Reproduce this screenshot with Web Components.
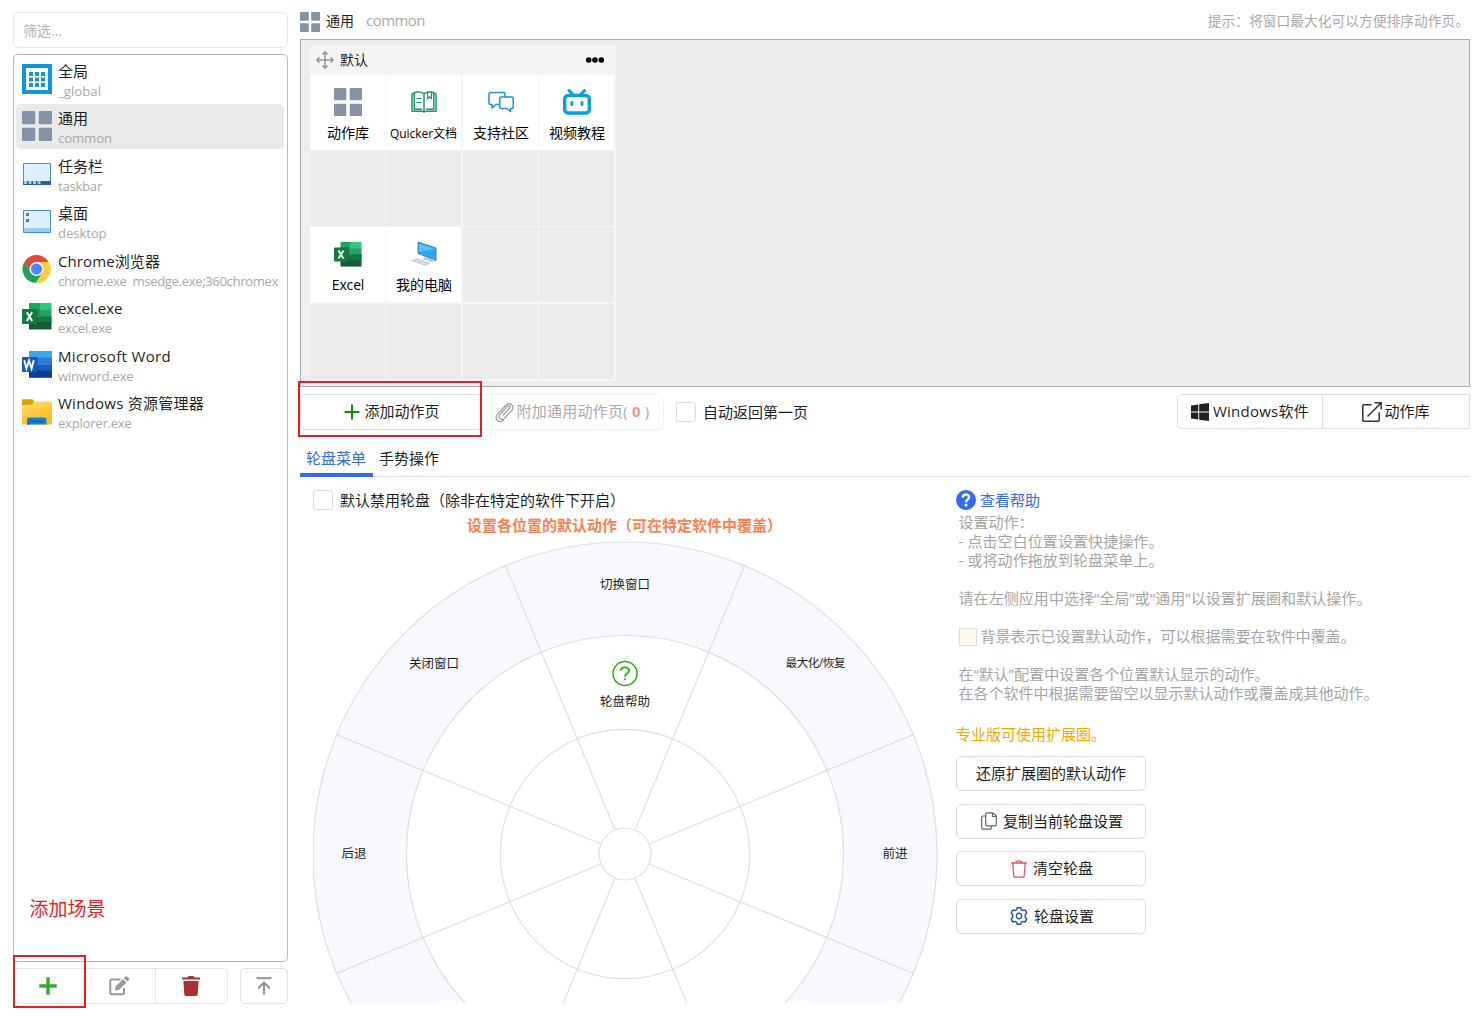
<!DOCTYPE html>
<html lang="zh-CN">
<head>
<meta charset="utf-8">
<title>Quicker</title>
<style>
html,body{margin:0;padding:0;background:#fff}
body{width:1482px;height:1016px;overflow:hidden;font:15px/20px "Open Sans","Noto Sans CJK SC",sans-serif;color:#1f1f1f}
</style>
</head>
<body>
<quicker-app></quicker-app>
<script>
const ICONS = {
  global: ['0 0 30 30', '<path fill="#1296db" d="M0 0h30v30H0z"/><path fill="#fff" d="M4 4h22v22H4z"/><g fill="#1296db"><path d="M7 8h4v4H7zM13 8h4v4h-4zM19 8h4v4h-4zM7 13.500h4v4H7zM13 13.500h4v4h-4zM19 13.500h4v4h-4zM7 19h4v4H7zM13 19h4v4h-4zM19 19h4v4h-4z"/></g>'],
  tiles: ['0 0 30 30', '<g fill="#8592a6"><rect width="13.2" height="13.2" rx="1.3"/><rect x="16.8" width="13.2" height="13.2" rx="1.3"/><rect y="16.8" width="13.2" height="13.2" rx="1.3"/><rect x="16.8" y="16.8" width="13.2" height="13.2" rx="1.3"/></g>'],
  taskbar: ['0 0 30 30', '<path fill="#def0ff" stroke="#4a8bd0" d="M1.5 4.5h27v21h-27z"/><path fill="#2f5f9e" d="M1 22h28v4H1z"/><path fill="#99ccff" d="M2 22h3v3H2zM6.5 22h3v3h-3zM11 22h3v3h-3zM15.500 22h3v3h-3z"/>'],
  desktop: ['0 0 30 30', '<path fill="#def0ff" stroke="#4a8bd0" d="M1.500 4.500h27v22h-27z"/><path fill="#99ccff" d="M2 22h26v4H2z"/><path fill="#3f80c8" d="M4 7h3v3H4zM4 13h3v3H4z"/>'],
  chrome: ['0 0 30 30', '<circle cx="14.500" cy="15" r="14" fill="#fc4"/><path fill="#dc4a3e" d="M2.400 8A14 14 0 0 1 26.600 8H14.500L9 18.200z"/><path fill="#1aa260" d="M2.400 8A14 14 0 0 0 13.800 29L20.600 18.500 14.500 22 8.500 18.500z"/><path fill="#ffcd40" d="M26.600 8A14 14 0 0 1 13.800 29L20.600 18.500 20.500 11.500 14.500 8z"/><circle cx="14.500" cy="15" r="7" fill="#f5f5f5"/><circle cx="14.500" cy="15" r="5.500" fill="#4b87f0"/>'],
  excel: ['0 0 30 30', '<path fill="#21a366" d="M7 2h11v7H7z"/><path fill="#33c481" d="M18 2h11.500v7H18z"/><path fill="#1b9257" d="M7 8.700h11v6.600H7z"/><path fill="#21a366" d="M18 8.700h11.500v6.600H18z"/><path fill="#107c41" d="M7 15.300h22.500V22H7z"/><path fill="#185c37" d="M7 21h22.500v7.500H7z"/><path fill="#117a42" d="M18 15.300h11.500V21H18z"/><path fill="#0b6032" d="M7 8h9v15H7z" opacity=".5"/><rect y="8" width="15" height="15" rx="1" fill="#107c41"/><path stroke="#fff" stroke-width="2" fill="none" d="M4.800 11.300l5.300 8.600M10.100 11.300L4.800 19.900"/>'],
  word: ['0 0 30 30', '<path fill="#41a5ee" d="M7 2h23v7H7z"/><path fill="#2b7cd3" d="M7 8.600h23v6.800H7z"/><path fill="#185abd" d="M7 15.300h23v6.800H7z"/><path fill="#103f91" d="M7 21.800h23v7H7z"/><path fill="#0b3a80" d="M7 8h9v15H7z" opacity=".4"/><rect y="8" width="15" height="15" rx="1" fill="#185abd"/><path stroke="#fff" stroke-width="1.900" fill="none" d="M2.300 11.200l2.100 8.400L7 11.500l2.600 8.100 2.100-8.400"/>'],
  folder: ['0 0 30 30', '<path fill="#dfa000" d="M0 4.200a2 2 0 0 1 1-1h9.200l2.300 2.200L10 10H0z"/><path fill="url(#fo)" d="M0 9l9-.3L13 5.700h15.500a1.500 1.500 0 0 1 1.500 1.500V28.500H0z"/><path fill="#1181d4" d="M5 28.500v-5a2 2 0 0 1 2-2h15.500a2 2 0 0 1 2 2v5z"/><path fill="#0a5fa8" d="M8 24.500h13.500V26H8zM5 27.500h3v1H5z"/><defs><linearGradient id="fo" x1="0" y1="0" x2=".6" y2="1"><stop stop-color="#ffdb6b"/><stop offset="1" stop-color="#fcbc1e"/></linearGradient></defs>'],
  plusBold: ['0 0 18 18', '<path stroke="#3a3" stroke-width="3.400" d="M9 .3v17.400M.3 9h17.400"/>'],
  plus: ['0 0 16 16', '<path stroke="#0a8f0a" stroke-width="2" d="M8 .5v15M.5 8h15"/>'],
  edit: ['0 0 20 20', '<path fill="none" stroke="#999" stroke-width="2" d="M11.500 3.500H2.300a1 1 0 0 0-1 1v12.700a1 1 0 0 0 1 1H14a1 1 0 0 0 1-1V12"/><path fill="#999" d="M6 14.500l.5-4L14 3l3.400 3.400-7.500 7.600zM14.900 2l1.300-1.300a1.500 1.500 0 0 1 2 0L19.700 2a1.500 1.500 0 0 1 0 2.100l-1.300 1.300z"/>'],
  trashFill: ['0 0 18 20', '<path fill="#a83232" d="M0 1.400h5.500L6.500 0h5l1 1.400H18v2H0zM1.400 5h15.200l-.9 13.300A1.800 1.800 0 0 1 14 20H4a1.800 1.800 0 0 1-1.700-1.700z"/>'],
  top: ['0 0 16 18', '<path fill="none" stroke="#999" stroke-width="2.200" d="M.5 1.200h15M8 17.500V6M2.200 11.200L8 5.500l5.800 5.700"/>'],
  move: ['0 0 18 18', '<path fill="none" stroke="#999" stroke-width="1.500" d="M9 1v16M1 9h16M6.300 3.500L9 .9l2.700 2.600M6.300 14.500L9 17.100l2.700-2.600M3.500 6.300L.9 9l2.600 2.700M14.500 6.300L17.100 9l-2.600 2.700"/>'],
  dots: ['0 0 18 6', '<circle cx="2.700" cy="3" r="2.800"/><circle cx="9" cy="3" r="2.800"/><circle cx="15.300" cy="3" r="2.800"/>'],
  book: ['0 0 26 22', '<path fill="none" stroke="#159b6e" stroke-width="1.500" stroke-linejoin="round" d="M13 2.800C11 .7 5.500.5 3.200 1.800 1.500 2.500 1 2.800 1 4v16.200h10.500c1 0 1 .8 1.500.8s.5-.8 1.500-.8H25V4c0-1.200-.5-1.500-2.200-2.200C20.500.5 15 .7 13 2.800zM13 2.800V20M3.200 2v16.300H11M22.800 2v16.300H15"/><path fill="none" stroke="#159b6e" stroke-width="1.200" d="M5.500 7.500h5M5.500 11.500h5M16.500 2v5.500l2-1.700 2 1.700V1.500"/>'],
  chat: ['0 0 26 22', '<path fill="none" stroke="#1c92d8" stroke-width="1.500" stroke-linejoin="round" d="M11.500 13.500H8L4 17v-3.500H2.500A1.500 1.500 0 0 1 1 12V3a1.500 1.500 0 0 1 1.500-1.500h13A1.500 1.500 0 0 1 17 3v2.500M13 6h11a1.200 1.200 0 0 1 1.200 1.200v9.100a1.200 1.200 0 0 1-1.200 1.200h-1.500v3l-4-3H13a1.200 1.200 0 0 1-1.200-1.200V7.200A1.200 1.200 0 0 1 13 6z"/>'],
  bili: ['0 0 28 26', '<rect x="1.700" y="6.500" width="24.600" height="17.500" rx="3.500" fill="none" stroke="#0aa1db" stroke-width="3.400"/><path stroke="#0aa1db" stroke-width="3" stroke-linecap="round" d="M6 1.600l4 3.900M21.500 1.600l-4 3.900M8.800 13.500v2M19 13.500v2"/>'],
  pc: ['0 0 26 26', '<path fill="#2aa7f5" stroke="#55687a" stroke-width=".8" d="M7 1l18 6v12.500L7 12.500z"/><path fill="#58bffa" d="M8 2.500l16 5.300L8 11z"/><path fill="#b9c3ca" d="M13 16l5 1.800 5 .7 1 1.500-3 1-9-3z"/><path fill="#c3cbd1" d="M0 19.800l6-2.800 14 4.800-5 3.200z"/><path stroke="#eef1f3" stroke-width=".7" fill="none" d="M3 18.500l13 5M6 17.500l12 4.500M5 21.300l6-3M10 23l5-3"/>'],
  clip: ['0 0 19 20', '<path fill="none" stroke="#999" stroke-width="1.200" stroke-linecap="round" d="M16.800 8.300l-7.400 8c-3 3-7.200-.3-4.600-3.500l7.700-8.600c1.400-1.300 3.300.3 2.200 1.800L8.300 13M16.800 8.300c3.200-4.200-1.800-9-5.700-5.300L2.500 12.300c-4 5 2 9.500 6 5.500"/>'],
  win: ['0 0 18 18', '<path fill="#222" d="M0 2.500l7.300-1v7H0zM8.200 1.300L18 0v8.500H8.200zM0 9.400h7.300v7.100L0 15.500zM8.200 9.400H18V18l-9.800-1.300z"/>'],
  open: ['0 0 20 20', '<path fill="none" stroke="#333" stroke-width="1.500" d="M9.500 2.800H1.800a1 1 0 0 0-1 1v14.400a1 1 0 0 0 1 1h14.400a1 1 0 0 0 1-1v-8M5.500 14.500L19 1M12.500.8h6.700v6.700"/>'],
  help: ['0 0 20 20', '<circle cx="10" cy="10" r="10" fill="#326cf3"/><path fill="none" stroke="#fff" stroke-width="2.500" d="M6.700 7.600C7 3.500 13.300 3.700 13.100 7.500 13 9.600 10 9.500 10 12.200"/><circle cx="10" cy="15" r="1.500" fill="#fff"/>'],
  copy: ['0 0 16 18', '<path fill="none" stroke="#666" stroke-width="1.200" d="M4.700 4H2A1.300 1.300 0 0 0 .7 5.300v10.500A1.300 1.300 0 0 0 2 17.100h7a1.300 1.300 0 0 0 1.300-1.300v-2M6 .8h6l3.300 3.300v8.400a1.300 1.300 0 0 1-1.300 1.300H6a1.300 1.300 0 0 1-1.300-1.300V2.100A1.300 1.300 0 0 1 6 .8zM11.500 1v3.500H15"/>'],
  trash: ['0 0 16 18', '<path fill="none" stroke="#f0526a" stroke-width="1.300" d="M.3 3h15.400M4.800 3C5 .2 11 .2 11.200 3M1.800 3l1 13a1.200 1.200 0 0 0 1.200 1.200h8a1.200 1.200 0 0 0 1.200-1.200l1-13"/>'],
  gear: ['0 0 18 18', '<path fill="none" stroke="#2659a8" stroke-width="1.500" stroke-linejoin="round" d="M6.800 2.600L7.300.8h3.400l.5 1.800 1.700 1 2.100-.7 1.800 3-1.500 1.600v2.900l1.500 1.600-1.800 3-2.100-.6-1.700.9-.5 1.900H7.300l-.5-1.900-1.700-.9-2.100.6-1.800-3 1.500-1.600V7.500L1.200 5.900l1.800-3 2.100.7z"/><circle cx="9" cy="9" r="2.700" fill="none" stroke="#2659a8" stroke-width="1.400"/>']
};
function def(name, css, html, init) {
  customElements.define(name, class extends HTMLElement {
    connectedCallback() {
      if (this.shadowRoot) return;
      this.attachShadow({mode: 'open'}).innerHTML = '<style>' + css + '</style>' + (typeof html === 'function' ? html(this) : html);
      if (init) init(this);
    }
  });
}
const at = (e, n, d = '') => e.getAttribute(n) ?? d;

def('quicker-app', `
 :host{display:flex;position:relative;width:1482px;height:1016px;box-sizing:border-box;padding:12px 12px 12px 13px;gap:12px}
 main{width:1170px;display:flex;flex-direction:column}`,
 `<scene-sidebar></scene-sidebar>
  <main><page-header></page-header><page-board></page-board><page-toolbar></page-toolbar><tab-strip></tab-strip><wheel-panel></wheel-panel></main>
  <red-mark style="left:13px;top:955px;width:73px;height:53px"></red-mark>
  <red-mark style="left:298px;top:381px;width:184px;height:56px"></red-mark>
  <red-note style="left:29.500px;top:897px">添加场景</red-note>`);
def('red-mark', ':host{position:absolute;box-sizing:border-box;border:2px solid #ed1c24}', '');
def('red-note', ':host{position:absolute;color:#ed1c24;font-size:19px;line-height:24px}', '<slot></slot>');

def('scene-sidebar', `
 :host{display:flex;flex-direction:column;width:275px}
 .filter{box-sizing:border-box;height:36px;border:1.500px solid #e6e6e6;border-radius:6px;padding:0 9px;color:#b4b4b4;font-size:14px;line-height:35px}
 .list{box-sizing:border-box;height:908px;margin-top:6px;border:1px solid #bbb;border-radius:5px;padding:1px 2px 0;display:flex;flex-direction:column}
 .row{display:flex;margin-top:6px;height:36px;gap:12px}
 .group{display:flex;width:215px;box-sizing:border-box;border:1.500px solid #e4e4e4;border-radius:5px}
 .group div,.one{flex:1;display:flex;align-items:center;justify-content:center}
 .group div{padding-right:1px}
 .group div+div{border-left:1px solid #e4e4e4;padding-right:2px}
 .one{box-sizing:border-box;border:1.500px solid #e0e0e0;border-radius:5px}`,
 `<div class="filter">筛选...</div>
 <div class="list">
  <scene-item icon="global" sub="_global" sw="43">全局</scene-item>
  <scene-item icon="tiles" sub="common" sw="54" selected>通用</scene-item>
  <scene-item icon="taskbar" sub="taskbar" sw="44">任务栏</scene-item>
  <scene-item icon="desktop" sub="desktop" sw="48.500">桌面</scene-item>
  <scene-item icon="chrome" sub="chrome.exe&nbsp; msedge.exe;360chromex" sw="220" w="102">Chrome浏览器</scene-item>
  <scene-item icon="excel" sub="excel.exe" sw="54" w="64.500">excel.exe</scene-item>
  <scene-item icon="word" sub="winword.exe" sw="75.500" w="113">Microsoft Word</scene-item>
  <scene-item icon="folder" sub="explorer.exe" sw="73.500" w="146">Windows 资源管理器</scene-item>
 </div>
 <div class="row"><div class="group"><div><ui-icon name="plusBold" s="18"></ui-icon></div><div><ui-icon name="edit" s="20"></ui-icon></div><div><ui-icon name="trashFill" s="18" h="20"></ui-icon></div></div>
 <div class="one"><ui-icon name="top" s="16" h="18"></ui-icon></div></div>`);
def('scene-item', `
 :host{display:flex;height:45px;margin-bottom:2.530px;border-radius:5px;padding-left:6px;gap:6px;align-items:center;width:262px}
 :host([selected]){background:#e9e9e9}
 .t{display:flex;flex-direction:column;width:224px;padding-top:4px}
 .s{font-size:13.200px;color:#aaa;line-height:19px;height:19px}
 .n{line-height:21px;height:21px}`,
 e => `<ui-icon name="${at(e,'icon')}" s="30"></ui-icon><div class="t"><ui-text class="n" w="${at(e,'w')}"><slot></slot></ui-text><ui-text class="s" w="${at(e,'sw')}">${at(e,'sub')}</ui-text></div>`);

def('page-header', `
 :host{display:flex;height:27px;box-sizing:border-box;align-items:flex-start}
 ui-text{line-height:18px}
 .a{font-size:14px;margin-left:6px}.b{color:#aaa;margin:-1px 0 0 12px}
 .c{margin-left:auto;color:#aaa;font-size:13.750px;margin-right:1px}`,
 `<ui-icon name="tiles" s="20"></ui-icon><ui-text class="a">通用</ui-text><ui-text class="b" w="59">common</ui-text><ui-text class="c">提示：将窗口最大化可以方便排序动作页。</ui-text>`);

def('page-board', `
 :host{display:block;box-sizing:border-box;height:348px;border:1px solid #a9abb0;background:#eee;padding:5px 9px}
 .page{width:306px;height:336px;background:#f5f5f5}
 .h{display:flex;height:30px;align-items:center;padding:0 12px 0 6px;box-sizing:border-box;font-size:14px}
 .h ui-text{margin-left:6px}.h .d{margin-left:auto}
 .g{display:grid;grid-template-columns:76px 77px 76px 75px;grid-template-rows:76px 76px 77px 75px}`,
 `<div class="page"><div class="h"><ui-icon name="move" s="18"></ui-icon><ui-text>默认</ui-text><ui-icon class="d" name="dots" s="18" h="6"></ui-icon></div>
 <div class="g">
 <action-cell icon="tiles" s="28">动作库</action-cell><action-cell icon="book" s="26" h="22" w="67" small>Quicker文档</action-cell><action-cell icon="chat" s="26" h="22">支持社区</action-cell><action-cell icon="bili" s="28" h="26">视频教程</action-cell>
 ${'<action-cell></action-cell>'.repeat(4)}
 <action-cell icon="excel" s="28" w="32.500">Excel</action-cell><action-cell icon="pc" s="26">我的电脑</action-cell>
 ${'<action-cell></action-cell>'.repeat(6)}</div></div>`);
def('action-cell', `
 :host{display:flex;flex-direction:column;width:75px;height:75px;background:#ebebeb;align-items:center;color:#000;font-size:14px}
 :host([icon]){background:#fff}
 :host([small]){font-size:12px}
 .i{height:28px;margin-top:13px;display:flex;align-items:center}
 ui-text{margin-top:7px;line-height:20px;padding-left:1px}
 :host([small]) ui-text{margin-top:8px;padding-left:0}`,
 e => e.hasAttribute('icon') ? `<div class="i"><ui-icon name="${at(e,'icon')}" s="${at(e,'s')}" h="${at(e,'h',at(e,'s'))}"></ui-icon></div><ui-text w="${at(e,'w')}"><slot></slot></ui-text>` : '');

def('page-toolbar', `
 :host{display:flex;height:36px;margin-top:7px;align-items:stretch}
 .l,.r{display:flex;box-sizing:border-box}
 .l>div,.r>div{display:flex;align-items:center;justify-content:center;box-sizing:border-box}
 .l ui-text{padding-bottom:2px}
 .r ui-text{padding-bottom:1px}
 .add{width:182px;border:1.500px solid #ddd;border-radius:5px 0 0 5px;gap:4px;padding-left:2px}
 .att{width:182px;border:1.500px solid #f2f2f2;border-left:0;border-radius:0 6px 6px 0;color:#aaa;gap:3px;padding-right:1px}
 b{color:#ff9191}
 ui-check{margin:0 0 1px 12px}
 .r{margin-left:auto;border:1px solid #ddd;border-radius:5px 0 0 5px;width:293px;height:35px}
 .w{width:145px;border-right:1px solid #ddd;gap:4px}.o{flex:1;gap:2px}`,
 `<div class="l"><div class="add"><ui-icon name="plus" s="16"></ui-icon><ui-text>添加动作页</ui-text></div><div class="att"><ui-icon name="clip" s="19" h="20"></ui-icon><ui-text w="133">附加通用动作页( <b>0</b> )</ui-text></div></div>
 <ui-check>自动返回第一页</ui-check>
 <div class="r"><div class="w"><ui-icon name="win" s="18"></ui-icon><ui-text w="96">Windows软件</ui-text></div><div class="o"><ui-icon name="open" s="20"></ui-icon><ui-text>动作库</ui-text></div></div>`);
def('ui-check', `:host{display:flex;align-items:center;gap:7px}i{display:block;box-sizing:border-box;width:20px;height:20px;border:1.500px solid #ddd;border-radius:3px;background:#fff}`, `<i></i><ui-text><slot></slot></ui-text>`);

def('tab-strip', `
 :host{display:flex;height:47px;box-sizing:border-box;border-bottom:1px solid #ddd;align-items:flex-end}
 div{height:28px;margin-bottom:-1px;box-sizing:border-box;padding:0 6px;line-height:19px}
 .on{color:#326cf3;border-bottom:4px solid #326cf3;width:73px}`,
 `<div class="on">轮盘菜单</div><div>手势操作</div>`);

def('wheel-panel', `
 :host{display:flex;height:526px;overflow:hidden;width:1170px}
 .w{width:638px;box-sizing:border-box;padding:13px 0 0 13px}
 .t{color:#ff7f50;font-weight:bold;text-align:center;width:625px;height:20px;margin:5px 0 0 -1px;line-height:20px}
 wheel-menu{margin-top:6px}
 help-column{margin-left:18px;margin-top:12px}`,
 `<div class="w"><ui-check>默认禁用轮盘（除非在特定的软件下开启）</ui-check><div class="t">设置各位置的默认动作（可在特定软件中覆盖）</div><wheel-menu></wheel-menu></div><help-column></help-column>`);

def('wheel-menu', `:host{display:block}svg{display:block}text{font-size:12.500px;fill:#1f1f1f;text-anchor:middle}.sm{font-size:11.700px}`, () => {
  let l = '';
  for (let k = 0; k < 8; k++) {
    const a = (22.5 + 45 * k) * Math.PI / 180, c = Math.cos(a), s = Math.sin(a);
    l += `<path d="M${26*c} ${26*s}L${312*c} ${312*s}"/>`;
  }
  return `<svg width="626" height="463" viewBox="-312 -313 626 463"><g fill="none" stroke="#e0e0e0" stroke-width="1.200"><circle r="312" fill="#f8f9fe"/><circle r="218.500" fill="#fff"/><circle r="124.700"/><circle r="26"/>${l}</g>
  <g><text x="0" y="-265.500">切换窗口</text><text x="-191" y="-186.500">关闭窗口</text><text class="sm" x="190.500" y="-187" textLength="60">最大化/恢复</text><text x="-271" y="4">后退</text><text x="270" y="4">前进</text><text x="0" y="-148.500">轮盘帮助</text></g>
  <g fill="none" stroke="#2ab012" transform="translate(0 -180.500)"><circle r="12" stroke-width="1.500"/><path stroke-width="1.900" d="M-4.300-2.700C-4-7.300 4.300-7.300 4.100-2.800 4 0 0-.2 0 3.200"/><circle cy="5.800" r=".8" fill="#2ab012" stroke-width=".6"/></g></svg>`;
});

def('help-column', `
 :host{display:block;width:460px}
 .h{display:flex;align-items:center;gap:4px;height:21px;color:#326cf3}
 .g{color:#a6a6a6;padding-left:2.500px;margin-top:3px}
 .g>div{height:19px;line-height:19px;display:flex;align-items:center}
 i{width:16px;height:16px;border:1px solid #ddd;background:#fff9ee;margin-right:4px}
 .o{color:#ffa500;margin-top:21px;height:20px}
 .b{display:flex;flex-direction:column;gap:12.500px;margin-top:12px;width:190px}
 .b div{height:35px;box-sizing:border-box;border:1.500px solid #ddd;border-radius:5px;display:flex;align-items:center;justify-content:center;gap:6px;padding-bottom:1px}
 .b ui-icon{margin:1px 0 0 2px}`,
 `<div class="h"><ui-icon name="help" s="20"></ui-icon><ui-text>查看帮助</ui-text></div>
 <div class="g"><div>设置动作：</div><div><ui-text w="205">- 点击空白位置设置快捷操作。</ui-text></div><div><ui-text w="205">- 或将动作拖放到轮盘菜单上。</ui-text></div><div></div>
 <div><ui-text w="413">请在左侧应用中选择“全局”或“通用”以设置扩展圈和默认操作。</ui-text></div><div></div>
 <div><i></i><ui-text>背景表示已设置默认动作，可以根据需要在软件中覆盖。</ui-text></div><div></div>
 <div><ui-text w="311">在“默认”配置中设置各个位置默认显示的动作。</ui-text></div><div>在各个软件中根据需要留空以显示默认动作或覆盖成其他动作。</div></div>
 <div class="o">专业版可使用扩展圈。</div>
 <div class="b"><div>还原扩展圈的默认动作</div><div><ui-icon name="copy" s="16" h="18"></ui-icon>复制当前轮盘设置</div><div><ui-icon name="trash" s="16" h="18"></ui-icon>清空轮盘</div><div><ui-icon name="gear" s="18"></ui-icon>轮盘设置</div></div>`);

def('ui-icon', ':host{display:block;flex:none}svg{display:block}', e => {
  const [vb, body] = ICONS[at(e, 'name')], s = at(e, 's'), h = at(e, 'h', s);
  return `<svg width="${s}" height="${h}" viewBox="${vb}">${body}</svg>`;
});

/* Single-line label; an optional w attribute spreads its letters to that width. */
def('ui-text', ':host{display:block;white-space:nowrap}span{display:inline-block}', '<span><slot></slot></span>', e => {
  const w = parseFloat(at(e, 'w'));
  if (!w) return;
  const s = e.shadowRoot.querySelector('span');
  let n = e.textContent.length;
  const slot = e.querySelector('slot');
  if (slot) n = slot.assignedNodes({flatten: true}).map(x => x.textContent).join('').length;
  e.style.letterSpacing = (w - s.getBoundingClientRect().width) / n + 'px';
});
</script>
</body>
</html>
